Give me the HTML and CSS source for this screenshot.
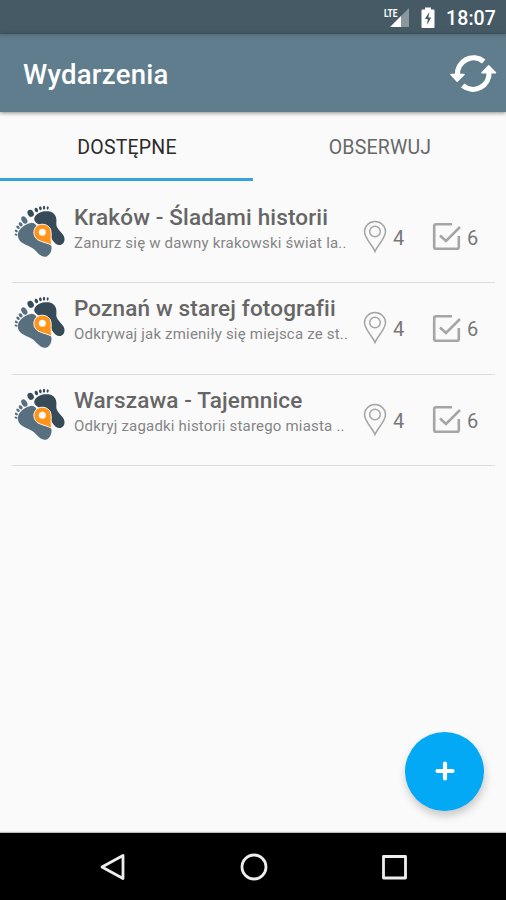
FILE: index.html
```html
<!DOCTYPE html>
<html lang="pl">
<head>
<meta charset="utf-8">
<title>Wydarzenia</title>
<link rel="stylesheet" href="styles.css">
</head>
<body>
<svg class="defs" width="0" height="0" aria-hidden="true">
  <symbol id="feet" viewBox="42 24 156 168">
    <path fill="#374a57" d="M104 66C112 52 132 46 152 50C166 55 171 68 169 83C167 99 182 108 191 122C198 137 190 151 176 150C163 147 156 133 148 119C139 102 119 91 107 82C102 77 102 71 104 66Z"/>
    <g fill="#374a57"><ellipse cx="92" cy="55" rx="9" ry="11" transform="rotate(-28 92 55)"/><ellipse cx="109" cy="45" rx="5" ry="7" transform="rotate(-20 109 45)"/><ellipse cx="121" cy="40" rx="4" ry="6" transform="rotate(-12 121 40)"/><ellipse cx="132" cy="38" rx="3.500" ry="5.500"/><ellipse cx="143" cy="39" rx="3" ry="5" transform="rotate(15 143 39)"/></g>
    <path fill="#586f7f" d="M57 107C66 94 79 86 95 83C109 84 112 96 114 110C118 128 136 130 150 143C160 158 153 180 138 185C122 187 113 173 102 163C89 152 70 149 60 138C52 128 52 116 57 107Z"/>
    <g fill="#586f7f"><ellipse cx="73" cy="75" rx="8" ry="12" transform="rotate(-30 73 75)"/><ellipse cx="62" cy="88" rx="5" ry="7" transform="rotate(-40 62 88)"/><ellipse cx="54" cy="97" rx="4" ry="6" transform="rotate(-48 54 97)"/><ellipse cx="49" cy="108" rx="3.500" ry="5" transform="rotate(-60 49 108)"/><ellipse cx="48" cy="119" rx="3" ry="4.500" transform="rotate(-70 48 119)"/></g>
    <path fill="#ff9418" stroke="#fafafa" stroke-width="3" d="M156 151C144 144 127 142 114 135C99 125 98 106 109 94C122 83 143 87 151 101C157 115 150 134 156 151Z"/>
    <circle cx="127" cy="112" r="10.500" fill="#fafafa"/>
  </symbol>
  <symbol id="pin" viewBox="0 0 24 34">
    <path d="M12 31.500C9.500 25 1.500 18.500 1.500 11.500A10.500 10 0 0 1 22.500 11.500C22.500 18.500 14.500 25 12 31.500Z"/>
    <circle cx="12" cy="11.500" r="5.300"/>
  </symbol>
  <symbol id="check" viewBox="0 0 30 30">
    <path d="M20 2.200H4Q2.200 2.200 2.200 4V25Q2.200 26.800 4 26.800H25Q26.800 26.800 26.800 25V14M8 13.500L14 19L28 5"/>
  </symbol>
</svg>
<header class="status">
  <svg class="signal" width="28" height="24" viewBox="0 0 28 24">
    <path fill="#8b979e" d="M26 2V21H18V10Z"/>
    <path fill="#fff" d="M7 21L18 10V21Z"/>
    <text class="lte" x="1" y="10.500" textLength="13.500" lengthAdjust="spacingAndGlyphs">LTE</text>
  </svg>
  <svg class="battery" width="14" height="22" viewBox="0 0 14 22">
    <path fill="#fff" d="M4 0.500H10V2.500H12.500Q13.500 2.500 13.500 3.500V20Q13.500 21 12.500 21H1.500Q0.500 21 0.500 20V3.500Q0.500 2.500 1.500 2.500H4Z"/>
    <path fill="#465a65" d="M8.500 5L3.800 12H6.800L6 18L10.200 10.500H7.400Z"/>
  </svg>
  <span class="time">18:07</span>
</header>
<div class="appbar">
  <h1>Wydarzenia</h1>
  <svg class="refresh" width="47" height="40" viewBox="0 0 47 40">
    <path fill="none" stroke="#fff" stroke-width="5.200" d="M7.500 22A16 16 0 0 1 33.700 8.500M39 19A16 16 0 0 1 12.700 32.500"/>
    <path fill="#fff" stroke="#fff" stroke-width="1.500" stroke-linejoin="round" d="M1 21.500H14L7.200 28.300ZM32 19.800H45.500L38.700 12.800Z"/>
  </svg>
</div>
<nav class="tabs">
  <div class="tab active"><span>DOSTĘPNE</span></div>
  <div class="tab"><span>OBSERWUJ</span></div>
</nav>
<main class="list">
  <article class="row">
    <svg class="feet"><use href="#feet"/></svg>
    <div class="copy"><h2>Kraków - Śladami historii</h2><p>Zanurz się w dawny krakowski świat la..</p></div>
    <svg class="pin"><use href="#pin"/></svg><span class="count">4</span>
    <svg class="check"><use href="#check"/></svg><span class="count">6</span>
  </article>
  <article class="row">
    <svg class="feet"><use href="#feet"/></svg>
    <div class="copy"><h2>Poznań w starej fotografii</h2><p>Odkrywaj jak zmieniły się miejsca ze st..</p></div>
    <svg class="pin"><use href="#pin"/></svg><span class="count">4</span>
    <svg class="check"><use href="#check"/></svg><span class="count">6</span>
  </article>
  <article class="row">
    <svg class="feet"><use href="#feet"/></svg>
    <div class="copy"><h2>Warszawa - Tajemnice</h2><p>Odkryj zagadki historii starego miasta ..</p></div>
    <svg class="pin"><use href="#pin"/></svg><span class="count">4</span>
    <svg class="check"><use href="#check"/></svg><span class="count">6</span>
  </article>
</main>
<button class="fab" aria-label="Dodaj"><svg width="20" height="20" viewBox="0 0 20 20"><path stroke="#fff" stroke-width="4.200" stroke-linecap="round" d="M10 2.500V17.500M2.500 10H17.500"/></svg></button>
<footer class="navbar">
  <svg width="28" height="30" viewBox="0 0 28 30"><path d="M24 3.500V26.500L3 15Z"/></svg>
  <svg width="28" height="30" viewBox="0 0 28 30"><circle cx="14" cy="15" r="12"/></svg>
  <svg width="28" height="30" viewBox="0 0 28 30"><rect x="3.500" y="4.500" width="22" height="21.500"/></svg>
</footer>
</body>
</html>
```
FILE: styles.css
```css
* { box-sizing: border-box; }
body {
  margin: 0;
  height: 900px;
  display: flex;
  flex-direction: column;
  position: relative;
  overflow: hidden;
  background: #fafafa;
  font-family: Roboto, "Liberation Sans", sans-serif;
}
.defs { position: absolute; }
h1, h2, p { margin: 0; white-space: nowrap; }
.status {
  flex: none;
  height: 34px;
  display: flex;
  align-items: center;
  justify-content: flex-end;
  padding-right: 10px;
  color: #fff;
  background: #465a65;
}
.signal { margin: 2px 10px 0 0; }
.lte { font: 700 11.500px Roboto, sans-serif; fill: #fff; }
.battery { margin: 2px 11px 0 0; }
.time { font-size: 19.500px; font-weight: 500; line-height: 34px; padding-top: 3px; letter-spacing: .1px; }
.appbar {
  flex: none;
  height: 78px;
  display: flex;
  align-items: center;
  justify-content: space-between;
  padding: 0 9px 0 23px;
  background: linear-gradient(#546f7c, #607d8d 4px);
  box-shadow: 0 1px 4px rgba(0, 0, 0, .45);
}
h1 { color: #fff; font-size: 27.500px; font-weight: 500; line-height: 34px; padding-top: 4px; letter-spacing: .25px; }
.tabs { flex: none; display: flex; height: 69px; }
.tab {
  flex: 1;
  display: flex;
  justify-content: center;
  padding: 24px 0 0 1px;
  font-size: 19.500px;
  line-height: 24px;
  letter-spacing: .2px;
  color: #686868;
}
.tab.active { color: #2b2b2b; border-bottom: 3px solid #36a3df; }
.list { flex: 1; padding: 10.500px 11px 0 12px; }
.row {
  display: flex;
  align-items: flex-start;
  height: 91.500px;
  border-bottom: 1.500px solid #ddd;
}
.feet { flex: none; width: 52px; height: 56px; margin: 11px 8px 0 2px; }
.copy { flex: none; width: 288px; padding-top: 11.400px; }
h2 { color: #666; font-size: 22.500px; line-height: 28px; font-weight: 500; letter-spacing: .15px; }
.copy p { color: #858585; font-size: 15px; line-height: 20px; margin-top: 2px; letter-spacing: .2px; }
.pin, .check { flex: none; fill: none; stroke: #a5a5a5; }
.pin { width: 24px; height: 34px; margin: 28px 6px 0 1px; stroke-width: 1.500; }
.check { width: 30px; height: 30px; margin: 30.500px 5px 0 27px; stroke-width: 2.600; }
.count { width: 12px; padding-top: 34px; color: #777; font-size: 20px; line-height: 24px; }
.fab {
  position: absolute;
  left: 405px;
  top: 731.500px;
  width: 79px;
  height: 79px;
  display: grid;
  place-items: center;
  padding: 0;
  border: 0;
  border-radius: 50%;
  background: #03a9f4;
  box-shadow: 1px 5px 9px rgba(0, 0, 0, .2);
}
.navbar {
  flex: none;
  height: 67px;
  display: flex;
  align-items: center;
  justify-content: space-between;
  padding: 0 98px 0 99px;
  background: #000;
  box-shadow: 0 -1px 1px rgba(0, 0, 0, .25);
}
.navbar svg { fill: none; stroke: #eee; stroke-width: 2.800; stroke-linejoin: round; }
```
